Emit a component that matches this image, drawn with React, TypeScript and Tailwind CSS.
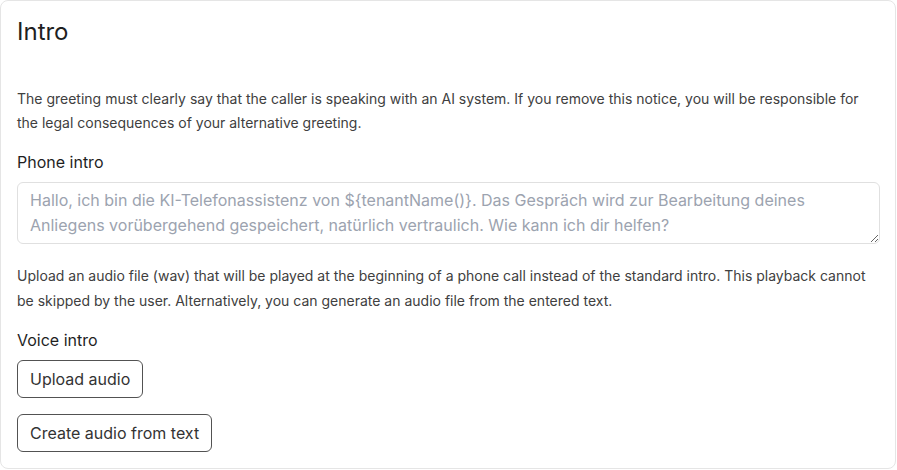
import React from "react";

export default function App() {
  return (
    <div className="w-[897px] h-[470px] bg-white" style={{ fontFamily: "Inter, 'Noto Sans', sans-serif" }}>
      <div className="w-[896px] h-[469px] border border-[#e5e5e5] rounded-[8px] px-4 pt-[16px] flex flex-col">
        <h1 className="text-[24px] leading-[30px] text-[#1f1f1f] font-normal">Intro</h1>
        <p className="mt-[40px] text-[14px] leading-[24px] text-[#404040]">
          The greeting must clearly say that the caller is speaking with an AI system. If you remove this notice, you will be responsible for the legal consequences of your alternative greeting.
        </p>
        <div className="mt-[15px] text-[16px] leading-[24px] text-[#1f1f1f]">Phone intro</div>
        <textarea
          className="mt-[8px] w-[863px] h-[62px] border border-[#e0e0e0] rounded-[6px] px-[12px] pt-[5px] pb-[5px] text-[16px] leading-[25px] text-[#1f1f1f] placeholder:text-[#9ca3af] outline-none resize-y"
          placeholder="Hallo, ich bin die KI-Telefonassistenz von ${tenantName()}. Das Gespräch wird zur Bearbeitung deines Anliegens vorübergehend gespeichert, natürlich vertraulich. Wie kann ich dir helfen?"
        />
        <p className="mt-[19px] text-[14px] leading-[25px] text-[#404040]">
          Upload an audio file (wav) that will be played at the beginning of a phone call instead of the standard intro. This playback cannot be skipped by the user. Alternatively, you can generate an audio file from the entered text.
        </p>
        <div className="mt-[15px] text-[16px] leading-[24px] text-[#1f1f1f]">Voice intro</div>
        <div className="mt-[8px] flex flex-col items-start gap-[16px]">
          <button className="h-[38px] px-[12px] border border-[#525252] rounded-[6px] text-[16px] text-[#333]">Upload audio</button>
          <button className="h-[38px] px-[12px] border border-[#525252] rounded-[6px] text-[16px] text-[#333]">Create audio from text</button>
        </div>
      </div>
    </div>
  );
}
